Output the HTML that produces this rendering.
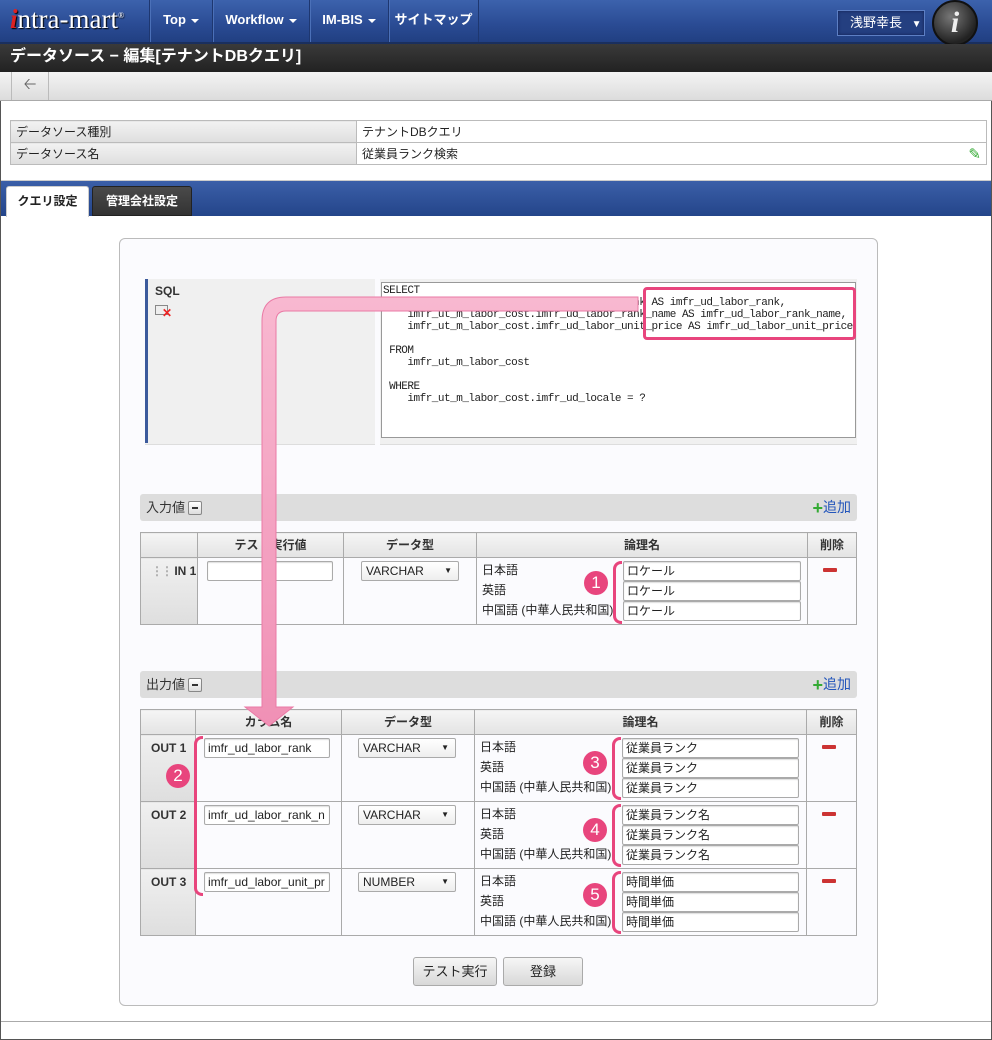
<!DOCTYPE html>
<html><head><meta charset="utf-8"><style>
*{box-sizing:border-box;margin:0;padding:0}
body{width:992px;height:1040px;position:relative;overflow:hidden;background:#fff;font-family:"Liberation Sans","Noto Sans CJK JP",sans-serif;font-size:12px;color:#222}
.a{position:absolute}
.hdr{left:0;top:0;width:992px;height:44px;background:linear-gradient(#3c62ad,#2a4b93 60%,#213f82);border-bottom:2px solid #1a2f5e}
.nav{top:0;height:42px;color:#fff;font-weight:bold;font-size:13px;line-height:40px;text-align:center;border-left:1px solid #1e3770;box-shadow:inset 1px 0 0 #4b70b8}
.tri{display:inline-block;width:0;height:0;border-left:4px solid transparent;border-right:4px solid transparent;border-top:4px solid #fff;margin-left:5px;vertical-align:middle}
.title{left:0;top:44px;width:992px;height:28px;background:linear-gradient(#3a3a3a,#222);color:#fff;font-weight:bold;font-size:16px;line-height:26px;padding-left:10px}
.tool{left:0;top:72px;width:992px;height:29px;background:linear-gradient(#f4f4f4,#dcdcdc);border-bottom:1px solid #aaa}
table{border-collapse:collapse}
.info{left:10px;top:120px;width:977px}
.info td{border:1px solid #bbb;height:22px;padding:0 5px;font-size:12px}
.info td.h{background:linear-gradient(#f2f2f2,#dedede);width:346px}
.tabbar{left:1px;top:180px;width:990px;height:36px;background:linear-gradient(#3b5fa8,#24458a);border-top:1px solid #ccc}
.tab{top:186px;height:30px;font-size:12px;font-weight:bold;line-height:28px;text-align:center;border-radius:3px 3px 0 0}
.panel{left:119px;top:238px;width:759px;height:768px;border:1px solid #bbb;border-radius:6px;background:#fbfbfe}
.sec{height:27px;background:#ddd;border-radius:3px;font-size:13px;line-height:27px;padding-left:6px;color:#333}
.mn{display:inline-block;width:14px;height:14px;border:1px solid #888;border-radius:2px;background:linear-gradient(#fff,#ddd);vertical-align:middle;position:relative;margin-left:3px;top:-1px}
.mn:after{content:"";position:absolute;left:3px;top:5px;width:6px;height:2px;background:#333}
.add{right:6px;top:0;color:#2255bb;font-size:14px}
.plus{color:#3a3;font-weight:bold;font-size:18px;vertical-align:middle}
.grid td,.grid th{border:1px solid #aaa;font-size:12px;vertical-align:top}
.grid th{height:25px;background:linear-gradient(#f5f5f5,#e3e3e3);font-weight:bold;line-height:24px;color:#333}
.grid td.lab{background:linear-gradient(#f0f0f0,#dedede);font-weight:bold;padding:6px 0 0 10px;color:#333}
.inp{position:absolute;height:20px;border:1px solid #aaa;border-radius:2px;background:#fff;font-size:12px;line-height:18px;padding-left:3px;overflow:hidden;white-space:nowrap;box-shadow:inset 0 1px 1px #ddd}
.sel{position:absolute;height:20px;border:1px solid #aaa;border-radius:2px;background:linear-gradient(#fff,#eee);font-size:12px;line-height:18px;padding-left:4px}
.sel:after{content:"▼";position:absolute;right:6px;font-size:8px}
.lg{position:absolute;font-size:12px;line-height:20px}
.del{position:absolute;width:14px;height:4px;background:#c33;border-radius:1px}
.badge{position:absolute;width:24px;height:24px;border-radius:12px;background:#e8457d;color:#fff;font-size:17px;text-align:center;line-height:24px}
.br{position:absolute;width:9px;border:3px solid #e8457d;border-right:none;border-radius:8px 0 0 8px}
.btn{top:957px;height:29px;border:1px solid #aaa;border-radius:3px;background:linear-gradient(#f6f6f6,#d8d8d8);font-size:13px;text-align:center;line-height:27px;color:#222}
.sql{font-family:"Liberation Mono","Noto Sans CJK JP",monospace;font-size:11px;line-height:12px;white-space:pre;letter-spacing:-0.5px}
</style></head><body>
<div class="a" style="left:0;top:0;width:992px;height:1040px;border:1px solid #555;border-top:none"></div>
<div class="a hdr"></div>
<div class="a" style="left:10px;top:4px;font-family:'Liberation Serif',serif;font-size:27px;color:#fff;text-shadow:1px 1px 1px #000"><span style="color:#d22;font-style:italic;font-weight:bold">i</span>ntra-mart<sup style="font-size:8px">®</sup></div>
<div class="a nav" style="left:149px;width:63px">Top<span class="tri"></span></div>
<div class="a nav" style="left:212px;width:97px">Workflow<span class="tri"></span></div>
<div class="a nav" style="left:309px;width:79px">IM-BIS<span class="tri"></span></div>
<div class="a nav" style="left:388px;width:90px">サイトマップ</div>
<div class="a nav" style="left:478px;width:1px"></div>
<div class="a" style="left:837px;top:10px;width:88px;height:26px;background:#243f80;border:1px solid #5d7fc4;color:#fff;font-size:13px;line-height:24px;padding-left:12px;box-shadow:inset 0 0 3px #102050">浅野幸長 <span style="font-size:10px;margin-left:6px">▼</span></div>
<div class="a" style="left:932px;top:0;width:46px;height:46px;border-radius:23px;background:radial-gradient(circle at 40% 35%,#777,#222 70%);border:2px solid #111;color:#eee;font:italic bold 30px 'Liberation Serif',serif;text-align:center;line-height:42px">i</div>
<div class="a title">データソース − 編集[テナントDBクエリ]</div>
<div class="a tool"><div class="a" style="left:11px;top:0;width:38px;height:28px;border-left:1px solid #bbb;border-right:1px solid #bbb;color:#666;font-size:16px;text-align:center;line-height:26px">&#x1F860;</div></div>
<table class="a info"><tr><td class="h">データソース種別</td><td>テナントDBクエリ</td></tr><tr><td class="h">データソース名</td><td>従業員ランク検索<span style="float:right;color:#3a3;font-size:15px">✎</span></td></tr></table>
<div class="a tabbar"></div>
<div class="a tab" style="left:6px;width:83px;background:#fff;color:#222;border:1px solid #ccc;border-bottom:none;height:31px">クエリ設定</div>
<div class="a tab" style="left:92px;width:100px;background:linear-gradient(#4a4a4a,#333);color:#fff;border:1px solid #222">管理会社設定</div>

<div class="a panel"></div>
<!-- SQL -->
<div class="a" style="left:145px;top:279px;width:712px;height:166px;background:#f0f0f0;border-bottom:1px solid #ddd"></div>
<div class="a" style="left:145px;top:279px;width:3px;height:164px;background:#3b5a9c"></div>
<div class="a" style="left:375px;top:279px;width:5px;height:166px;background:#fbfbfe"></div>
<div class="a" style="left:155px;top:284px;font-weight:bold;font-size:12px;color:#333">SQL</div>
<div class="a" style="left:155px;top:305px;width:13px;height:10px;border:1px solid #888;background:#eee"></div>
<div class="a" style="left:162px;top:306px;color:#e22;font-size:12px;font-weight:bold">✕</div>
<div class="a" style="left:381px;top:282px;width:475px;height:156px;border:1px solid #999;background:#fff;overflow:hidden"></div>
<div class="a sql" style="left:383px;top:285px">SELECT
    imfr_ut_m_labor_cost.imfr_ud_labor_rank AS imfr_ud_labor_rank,
    imfr_ut_m_labor_cost.imfr_ud_labor_rank_name AS imfr_ud_labor_rank_name,
    imfr_ut_m_labor_cost.imfr_ud_labor_unit_price AS imfr_ud_labor_unit_price

 FROM
    imfr_ut_m_labor_cost

 WHERE
    imfr_ut_m_labor_cost.imfr_ud_locale = ?</div>
<div class="a" style="left:643px;top:287px;width:213px;height:53px;border:3px solid #e8457d;border-radius:4px"></div>

<!-- input -->
<div class="a sec" style="left:140px;top:494px;width:717px">入力値<span class="mn"></span><span class="a add"><span class="plus">+</span>追加</span></div>
<table class="a grid" style="left:140px;top:532px;width:717px;height:93px">
<tr><th style="width:57px"></th><th style="width:146px">テスト実行値</th><th style="width:133px">データ型</th><th style="width:331px">論理名</th><th>削除</th></tr>
<tr><td class="lab"><span style="color:#aaa;letter-spacing:-2px">⋮⋮</span> IN 1</td><td></td><td></td><td></td><td></td></tr></table>
<div class="inp" style="left:207px;top:561px;width:126px"></div>
<div class="sel" style="left:361px;top:561px;width:98px">VARCHAR</div>
<div class="lg" style="left:482px;top:560px">日本語<br>英語<br>中国語 (中華人民共和国)</div>
<div class="inp" style="left:623px;top:561px;width:178px">ロケール</div>
<div class="inp" style="left:623px;top:581px;width:178px">ロケール</div>
<div class="inp" style="left:623px;top:601px;width:178px">ロケール</div>
<div class="del" style="left:823px;top:568px"></div>
<div class="br" style="left:613px;top:561px;height:63px"></div>
<div class="badge" style="left:584px;top:571px">1</div>

<!-- output -->
<div class="a sec" style="left:140px;top:671px;width:717px">出力値<span class="mn"></span><span class="a add"><span class="plus">+</span>追加</span></div>
<table class="a grid" style="left:140px;top:709px;width:717px;height:227px">
<tr><th style="width:55px"></th><th style="width:146px">カラム名</th><th style="width:133px">データ型</th><th style="width:332px">論理名</th><th>削除</th></tr>
<tr style="height:67px"><td class="lab">OUT 1</td><td></td><td></td><td></td><td></td></tr>
<tr style="height:67px"><td class="lab">OUT 2</td><td></td><td></td><td></td><td></td></tr>
<tr style="height:67px"><td class="lab">OUT 3</td><td></td><td></td><td></td><td></td></tr></table>

<div class="inp" style="left:204px;top:738px;width:126px">imfr_ud_labor_rank</div>
<div class="inp" style="left:204px;top:805px;width:126px">imfr_ud_labor_rank_n</div>
<div class="inp" style="left:204px;top:872px;width:126px">imfr_ud_labor_unit_pr</div>
<div class="sel" style="left:358px;top:738px;width:98px">VARCHAR</div>
<div class="sel" style="left:358px;top:805px;width:98px">VARCHAR</div>
<div class="sel" style="left:358px;top:872px;width:98px">NUMBER</div>
<div class="lg" style="left:480px;top:737px">日本語<br>英語<br>中国語 (中華人民共和国)</div>
<div class="lg" style="left:480px;top:804px">日本語<br>英語<br>中国語 (中華人民共和国)</div>
<div class="lg" style="left:480px;top:871px">日本語<br>英語<br>中国語 (中華人民共和国)</div>
<div class="inp" style="left:622px;top:738px;width:177px">従業員ランク</div>
<div class="inp" style="left:622px;top:758px;width:177px">従業員ランク</div>
<div class="inp" style="left:622px;top:778px;width:177px">従業員ランク</div>
<div class="inp" style="left:622px;top:805px;width:177px">従業員ランク名</div>
<div class="inp" style="left:622px;top:825px;width:177px">従業員ランク名</div>
<div class="inp" style="left:622px;top:845px;width:177px">従業員ランク名</div>
<div class="inp" style="left:622px;top:872px;width:177px">時間単価</div>
<div class="inp" style="left:622px;top:892px;width:177px">時間単価</div>
<div class="inp" style="left:622px;top:912px;width:177px">時間単価</div>
<div class="del" style="left:822px;top:745px"></div>
<div class="del" style="left:822px;top:812px"></div>
<div class="del" style="left:822px;top:879px"></div>
<div class="br" style="left:612px;top:737px;height:63px"></div>
<div class="br" style="left:612px;top:804px;height:63px"></div>
<div class="br" style="left:612px;top:871px;height:63px"></div>
<div class="br" style="left:194px;top:736px;height:160px"></div>
<div class="badge" style="left:166px;top:764px">2</div>
<div class="badge" style="left:583px;top:751px">3</div>
<div class="badge" style="left:583px;top:818px">4</div>
<div class="badge" style="left:583px;top:883px">5</div>

<div class="a btn" style="left:413px;width:84px">テスト実行</div>
<div class="a btn" style="left:503px;width:80px">登録</div>
<div class="a" style="left:1px;top:1021px;width:990px;height:1px;background:#aaa"></div>

<!-- arrow -->
<svg class="a" style="left:0;top:0" width="992" height="1040">
<defs><linearGradient id="g2" x1="0" y1="0" x2="0" y2="1"><stop offset="0" stop-color="#f8b8d0"/><stop offset="1" stop-color="#f090b5"/></linearGradient></defs>
<path d="M638 297 H286 Q262 297 262 321 V707 H245 L269 726 L293 707 H276 V321 Q276 311 286 311 H638 Z" fill="url(#g2)" stroke="#ea7aa5" stroke-width="1"/>
</svg>
</body></html>
